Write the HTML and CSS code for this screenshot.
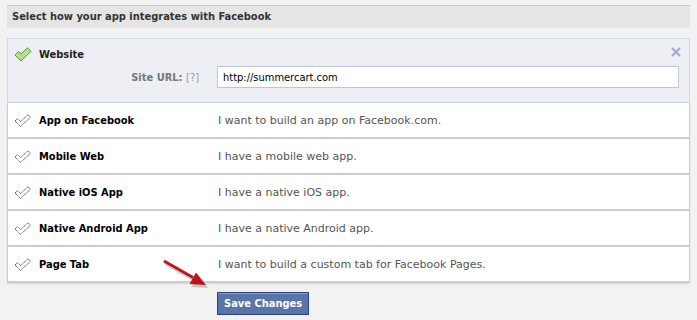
FILE: index.html
```html
<!DOCTYPE html>
<html lang="en">
<head>
    <meta charset="UTF-8">
    <title>App Integration</title>
    <link rel="stylesheet" href="styles.css">
</head>
<body>
    <div class="wrap">
        <div class="section-head">Select how your app integrates with Facebook</div>

        <div class="panel">
            <div class="panel-title">
                <svg class="check" width="18" height="15" viewBox="0 0 18 15">
                    <path d="M1 8 L4.5 4.5 L7 7 L13.5 0.8 L17 4.3 L7 14 Z" fill="#b6e08e" stroke="#5a9e35" stroke-width="1"/>
                </svg>
                <span class="label">Website</span>
                <svg class="close" width="10" height="10" viewBox="0 0 10 10">
                    <path d="M1 1 L9 9 M9 1 L1 9" stroke="#9aabcf" stroke-width="2"/>
                </svg>
            </div>
            <div class="field">
                <span class="field-label">Site URL: <span class="help">[?]</span></span>
                <input type="text" class="field-input" value="http://summercart.com">
            </div>
        </div>

        <div class="options" id="options">
            <!-- option rows are added here -->
        </div>

        <div class="actions">
            <button class="save-button">Save Changes</button>
        </div>

        <svg class="arrow" width="60" height="40" viewBox="0 0 60 40">
            <g transform="translate(2,3)" opacity="0.35">
                <path d="M2 2 L31 18.5" stroke="#777" stroke-width="3"/>
                <path d="M44 26 L27.5 25 L34 13.5 Z" fill="#777"/>
            </g>
            <path d="M2 2 L31 18.5" stroke="#c0141b" stroke-width="3"/>
            <path d="M44 26 L27.5 25 L34 13.5 Z" fill="#c0141b"/>
        </svg>
    </div>

    <script>
        const options = [
            { title: "App on Facebook", description: "I want to build an app on Facebook.com." },
            { title: "Mobile Web", description: "I have a mobile web app." },
            { title: "Native iOS App", description: "I have a native iOS app." },
            { title: "Native Android App", description: "I have a native Android app." },
            { title: "Page Tab", description: "I want to build a custom tab for Facebook Pages." }
        ];

        const list = document.getElementById('options');

        options.forEach(option => {
            const row = document.createElement('div');
            row.className = 'option-row';
            row.innerHTML = `
                <svg class="check" width="18" height="13" viewBox="0 0 18 13">
                    <path d="M1 7 L3.5 4.5 L6.5 7.5 L14 0.8 L16.5 3.3 L6.5 12.3 Z" fill="none" stroke="#3b4f8c" stroke-width="1" stroke-dasharray="1.2 0.6"/>
                </svg>
                <span class="label">${option.title}</span>
                <span class="description">${option.description}</span>
            `;
            list.appendChild(row);
        });
    </script>
</body>
</html>
```

FILE: styles.css
```css
body, html {
    margin: 0;
    padding: 0;
    background: #f2f2f2;
    font-family: 'DejaVu Sans', Verdana, sans-serif;
    font-size: 11px;
    color: #333;
}
.wrap {
    position: relative;
    width: 683px;
    margin: 5px 0 0 7px;
}
.section-head {
    border-top: 1px solid #cccccc;
    background: #e5e5e5;
    height: 22px;
    line-height: 21px;
    padding-left: 5px;
    font-family: 'DejaVu Sans Condensed', 'DejaVu Sans', sans-serif;
    font-weight: bold;
    color: #333;
}
.panel {
    margin-top: 10px;
    background: #edeff4;
    border: 1px solid #d4dae8;
    border-bottom-color: #c9d0e0;
    box-sizing: border-box;
    height: 65px;
}
.panel-title {
    display: flex;
    align-items: center;
    height: 23px;
    padding: 4px 0 0 6px;
}
.check {
    flex: none;
}
.label {
    font-family: 'DejaVu Sans Condensed', 'DejaVu Sans', sans-serif;
    font-weight: bold;
    color: #222;
    margin-left: 7px;
    width: 179px;
}
.close {
    flex: none;
    margin-left: auto;
    margin-right: 8px;
    margin-top: -6px;
}
.field {
    display: flex;
    align-items: center;
}
.field-label {
    width: 191px;
    text-align: right;
    font-family: 'DejaVu Sans Condensed', 'DejaVu Sans', sans-serif;
    font-weight: bold;
    color: #777;
}
.help {
    font-weight: normal;
    color: #999;
}
.field-input {
    margin-left: 18px;
    width: 462px;
    height: 22px;
    box-sizing: border-box;
    border: 1px solid #bdc7d8;
    padding: 0 5px;
    font-family: 'DejaVu Sans Condensed', 'DejaVu Sans', sans-serif;
    font-size: 11px;
    color: #000;
    background: white;
}
.options {
    border-left: 1px solid #cccccc;
    border-right: 1px solid #cccccc;
    box-shadow: 0 1px 2px rgba(0, 0, 0, 0.1);
}
.option-row {
    display: flex;
    align-items: center;
    height: 34px;
    padding-left: 6px;
    background: white;
    border-bottom: 2px solid #cccccc;
}
.option-row .label {
    color: #000;
}
.description {
    color: #555;
}
.actions {
    padding: 9px 0 0 210px;
}
.save-button {
    background: #5b74a8;
    border: 1px solid #29447e;
    color: white;
    font-family: 'DejaVu Sans Condensed', 'DejaVu Sans', sans-serif;
    font-size: 11px;
    font-weight: bold;
    height: 23px;
    padding: 0 6px;
    box-shadow: 0 1px 0 #8a9cc2 inset;
    cursor: pointer;
}
.arrow {
    position: absolute;
    left: 155px;
    top: 254px;
}
```
